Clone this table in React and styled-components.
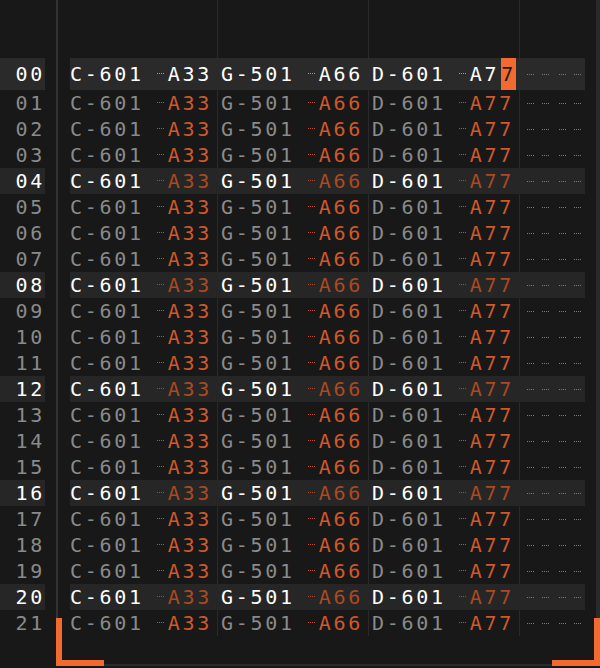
import React from "react";
import styled, { createGlobalStyle, css } from "styled-components";

const GlobalStyle = createGlobalStyle`
  html, body {
    margin: 0;
    padding: 0;
    background: #181818;
  }
  body {
    font-family: "DejaVu Sans Mono", "Liberation Mono", monospace;
  }
`;

const Page = styled.div`
  display: flex;
  width: 600px;
  height: 668px;
  overflow: hidden;
  background: #181818;
`;

const Gutter = styled.div`
  width: 56px;
  flex-shrink: 0;
  padding-top: 58px;
`;

const RowNumber = styled.div`
  width: 45px;
  height: ${(p) => (p.$first ? "32px" : "26px")};
  line-height: ${(p) => (p.$first ? "32px" : "26px")};
  text-align: right;
  font-size: 20px;
  letter-spacing: 2.7px;
  color: ${(p) => (p.$bright ? "#ffffff" : "#8a8a8a")};
  background: ${(p) => (p.$first ? "#2a2a2a" : p.$bright ? "#262626" : "transparent")};
`;

const Panel = styled.div`
  position: relative;
  flex: 1;
  height: 666px;
  box-sizing: border-box;
  border-left: 2px solid #333333;
  border-right: 4px solid #2a2a2a;
  border-bottom: 2px solid #2a2a2a;
  padding-left: 12px;
`;

const Corner = styled.div`
  position: absolute;
  bottom: -2px;
  width: 48px;
  height: 48px;
  box-sizing: border-box;
  border-bottom: 6px solid #f26a30;
  ${(p) =>
    p.$side === "left"
      ? css`
          left: -2px;
          border-left: 6px solid #f26a30;
        `
      : css`
          right: -4px;
          border-right: 6px solid #f26a30;
        `}
`;

const Grid = styled.div`
  width: 515px;
  padding-top: 58px;
  background-image: linear-gradient(
    to right,
    transparent 147px,
    #2a2a2a 147px,
    #2a2a2a 148px,
    transparent 148px,
    transparent 298px,
    #2a2a2a 298px,
    #2a2a2a 299px,
    transparent 299px,
    transparent 449px,
    #2a2a2a 449px,
    #2a2a2a 450px,
    transparent 450px
  );
`;

const Row = styled.div`
  display: grid;
  grid-template-columns: 148px 151px 151px 1fr;
  height: ${(p) => (p.$first ? "32px" : "26px")};
  background: ${(p) => (p.$first ? "#2a2a2a" : p.$bright ? "#262626" : "transparent")};
  font-size: 20px;
  line-height: ${(p) => (p.$first ? "32px" : "26px")};
`;

const Cell = styled.div`
  display: flex;
  align-items: center;
  padding-left: ${(p) => (p.$lead ? "0" : "3px")};
`;

const Note = styled.span`
  letter-spacing: 2.7px;
  color: ${(p) => p.$color};
`;

const Dots = styled.span`
  display: inline-block;
  width: 7px;
  height: 0;
  margin: ${(p) => p.$margin || "0 4px 2px 13px"};
  border-top: 1px dotted ${(p) => p.$color};
`;

const Effect = styled.span`
  letter-spacing: 2.7px;
  color: ${(p) => p.$color};
`;

const Cursor = styled.span`
  display: inline-block;
  width: 15px;
  margin-left: 2px;
  text-align: center;
  background: #f26a30;
  color: #1a1a1a;
`;

const Empty = styled.div`
  display: flex;
  align-items: center;
  padding-left: 7px;
  gap: 8px;
`;

const channels = [
  { note: "C-601", fx: "A33" },
  { note: "G-501", fx: "A66" },
  { note: "D-601", fx: "A77" },
];

const rows = Array.from({ length: 22 }, (_, i) => i);

const rowColors = (i) => {
  if (i === 0) return { note: "#ffffff", fx: "#ffffff", dots: "#9a9a9a" };
  if (i % 4 === 0) return { note: "#ffffff", fx: "#ab4a20", dots: "#ab4a20" };
  return { note: "#8a8a8a", fx: "#d0582a", dots: "#c0522a" };
};

const App = () => {
  return (
    <>
      <GlobalStyle />
      <Page>
        <Gutter>
          {rows.map((i) => (
            <RowNumber key={i} $first={i === 0} $bright={i % 4 === 0}>
              {String(i).padStart(2, "0")}
            </RowNumber>
          ))}
        </Gutter>
        <Panel>
          <Grid>
            {rows.map((i) => {
              const c = rowColors(i);
              return (
                <Row key={i} $first={i === 0} $bright={i % 4 === 0}>
                  {channels.map((ch, k) => (
                    <Cell key={k} $lead={k === 0}>
                      <Note $color={c.note}>{ch.note}</Note>
                      <Dots $color={c.dots} />
                      {i === 0 && k === 2 ? (
                        <Effect $color={c.fx}>
                          A7
                          <Cursor>7</Cursor>
                        </Effect>
                      ) : (
                        <Effect $color={c.fx}>{ch.fx}</Effect>
                      )}
                    </Cell>
                  ))}
                  <Empty>
                    <Dots $color="#7a7a7a" $margin="0" />
                    <Dots $color="#7a7a7a" $margin="0" />
                    <Dots $color="#7a7a7a" $margin="0 0 0 2px" />
                    <Dots $color="#7a7a7a" $margin="0" />
                  </Empty>
                </Row>
              );
            })}
          </Grid>
          <Corner $side="left" />
          <Corner $side="right" />
        </Panel>
      </Page>
    </>
  );
};

export default App;
